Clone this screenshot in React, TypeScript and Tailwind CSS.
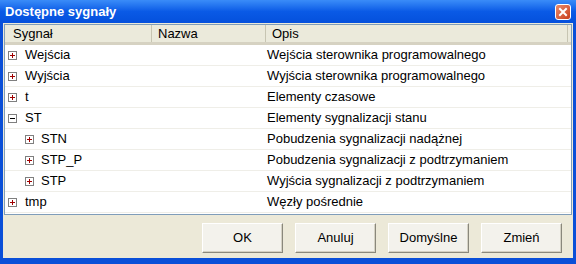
import React from "react";

type Row = { name: string; desc: string; level: number; open?: boolean };

const rows: Row[] = [
  { name: "Wejścia", desc: "Wejścia sterownika programowalnego", level: 0 },
  { name: "Wyjścia", desc: "Wyjścia sterownika programowalnego", level: 0 },
  { name: "t", desc: "Elementy czasowe", level: 0 },
  { name: "ST", desc: "Elementy sygnalizacji stanu", level: 0, open: true },
  { name: "STN", desc: "Pobudzenia sygnalizacji nadążnej", level: 1 },
  { name: "STP_P", desc: "Pobudzenia sygnalizacji z podtrzymaniem", level: 1 },
  { name: "STP", desc: "Wyjścia sygnalizacji z podtrzymaniem", level: 1 },
  { name: "tmp", desc: "Węzły pośrednie", level: 0 },
];

function Box({ open }: { open?: boolean }) {
  return (
    <svg width="9" height="9" viewBox="0 0 9 9" className="shrink-0">
      <rect x="0.5" y="0.5" width="8" height="8" fill="#fff" stroke="#7f7f7f" />
      <line x1="2" y1="4.5" x2="7" y2="4.5" stroke={open ? "#000" : "#a00000"} />
      {!open && <line x1="4.5" y1="2" x2="4.5" y2="7" stroke="#a00000" />}
    </svg>
  );
}

function Btn({ label }: { label: string }) {
  return (
    <div className="w-[81px] h-[30px] flex items-center justify-center bg-[#f3f2ec] border border-t-white border-l-white border-r-[#8a887c] border-b-[#8a887c] shadow-[inset_-1px_-1px_0_#d5d2c4] text-[13px] text-black">
      {label}
    </div>
  );
}

export default function App() {
  return (
    <div
      className="w-[576px] h-[264px] flex flex-col bg-[#0a4fd8] overflow-hidden"
      style={{ fontFamily: '"Liberation Sans", Arial, sans-serif' }}
    >
      <div className="h-[23px] shrink-0 flex items-center justify-between pl-[5px] pr-[5px] bg-gradient-to-b from-[#3a8cf8] via-[#0a5ae6] to-[#0550dc]">
        <span className="text-white font-bold text-[13px] leading-none">Dostępne sygnały</span>
        <div className="w-[16px] h-[16px] rounded-[3px] border border-white bg-gradient-to-br from-[#e98a6a] to-[#c83a14] flex items-center justify-center">
          <svg width="10" height="10" viewBox="0 0 10 10">
            <path d="M2 2 L8 8 M8 2 L2 8" stroke="#fff" strokeWidth="2" strokeLinecap="square" />
          </svg>
        </div>
      </div>
      <div className="flex-1 mx-[3px] mb-[6px] bg-[#ece9d8] flex flex-col pt-[1px] px-[1px]">
        <div className="h-[191px] border border-[#7f9db9] bg-white flex flex-col">
          <div className="h-[20px] shrink-0 flex bg-[#ebeadb] border-b-[3px] border-[#d6d2c2] text-[13px] text-black">
            <div className="w-[147px] pl-[8px] flex items-center border-r border-[#c7c5b2]">Sygnał</div>
            <div className="w-[114px] pl-[6px] flex items-center border-r border-[#c7c5b2]">Nazwa</div>
            <div className="flex-1 pl-[6px] flex items-center border-r border-[#c7c5b2]">Opis</div>
            <div className="w-[3px]" />
          </div>
          {rows.map((r) => (
            <div key={r.name} className="h-[21px] shrink-0 flex border-b border-[#efeee8] text-[13px] text-black">
              <div className={`w-[147px] flex items-center ${r.level ? "pl-[20px]" : "pl-[3px]"}`}>
                <Box open={r.open} />
                <span className={r.level ? "ml-[7px]" : "ml-[8px]"}>{r.name}</span>
              </div>
              <div className="w-[114px]" />
              <div className="flex-1 flex items-center pl-[1px]">{r.desc}</div>
            </div>
          ))}
        </div>
        <div className="flex justify-end gap-[12px] pr-[10px] mt-[8px]">
          <Btn label="OK" />
          <Btn label="Anuluj" />
          <Btn label="Domyślne" />
          <Btn label="Zmień" />
        </div>
      </div>
    </div>
  );
}
